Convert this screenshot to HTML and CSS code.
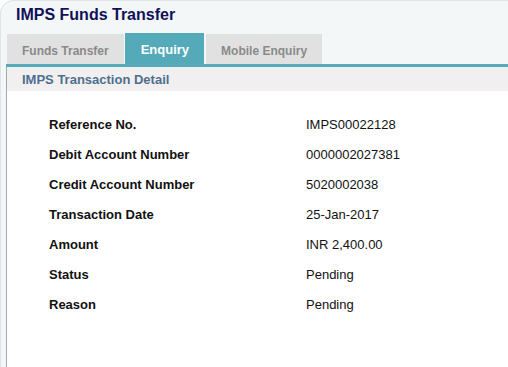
FILE: index.html
```html
<!DOCTYPE html>
<html>
<head>
<meta charset="utf-8">
<link rel="stylesheet" href="styles.css">
</head>
<body>
<div class="page">
  <h1 class="title">IMPS Funds Transfer</h1>
  <div class="tabs">
    <div class="tab">Funds Transfer</div>
    <div class="tab active">Enquiry</div>
    <div class="tab">Mobile Enquiry</div>
  </div>
  <div class="tabbar"></div>
  <div class="panel">
    <div class="panel-head">IMPS Transaction Detail</div>
    <div class="details">
      <div class="label">Reference No.</div><div class="value">IMPS00022128</div>
      <div class="label">Debit Account Number</div><div class="value">0000002027381</div>
      <div class="label">Credit Account Number</div><div class="value">5020002038</div>
      <div class="label">Transaction Date</div><div class="value">25-Jan-2017</div>
      <div class="label">Amount</div><div class="value">INR 2,400.00</div>
      <div class="label">Status</div><div class="value">Pending</div>
      <div class="label">Reason</div><div class="value">Pending</div>
    </div>
  </div>
</div>
</body>
</html>
```

FILE: styles.css
```css
html, body {
  margin: 0;
  padding: 0;
  background: #ffffff;
  font-family: "Liberation Sans", Arial, sans-serif;
}

.page {
  box-sizing: border-box;
  height: 367px;
  background: #f3f7f8;
  border-top: 1px solid #dfe4e7;
  border-left: 1px solid #dfe4e7;
  border-top-left-radius: 14px;
  padding: 5px 0 0 5px;
  display: flex;
  flex-direction: column;
}

.title {
  margin: 0;
  padding-left: 10px;
  font-size: 16px;
  line-height: 18px;
  font-weight: bold;
  color: #111158;
}

.tabs {
  display: flex;
  align-items: flex-end;
  height: 31px;
  margin-top: 9px;
  padding-left: 1px;
}

.tab {
  height: 30px;
  line-height: 34px;
  padding: 0 15px;
  background: #e1e1e1;
  color: #8a8a8a;
  font-size: 12px;
  font-weight: bold;
}

.tab.active {
  height: 31px;
  line-height: 34px;
  padding: 0 15px 0 16px;
  margin: 0 2px 0 1px;
  background: #54aab9;
  color: #ffffff;
  font-size: 13px;
}

.tabbar {
  height: 3px;
  background: #54aab9;
}

.panel {
  flex: 1;
  background: #ffffff;
  border-left: 1px solid #a9a9a9;
}

.panel-head {
  height: 24px;
  line-height: 25px;
  padding-left: 15px;
  background: #f2eff0;
  color: #4d6f8e;
  font-size: 13px;
  font-weight: bold;
}

.details {
  display: grid;
  grid-template-columns: 257px 1fr;
  grid-auto-rows: 30px;
  padding: 19px 0 0 42px;
  font-size: 13px;
  line-height: 30px;
  color: #111111;
}

.label {
  font-weight: bold;
}
```
